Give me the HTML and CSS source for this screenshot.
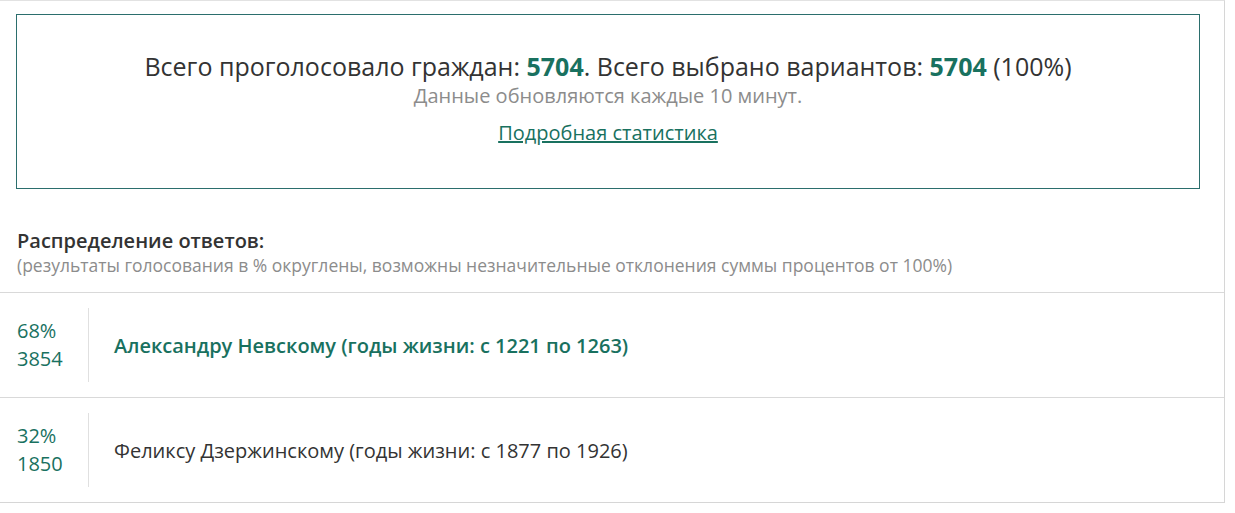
FILE: index.html
```html
<!DOCTYPE html>
<html lang="ru">
<head>
    <meta charset="UTF-8">
    <meta name="viewport" content="width=device-width, initial-scale=1.0">
    <title>Результаты голосования</title>
    <link rel="stylesheet" href="styles.css">
</head>
<body>

    <div class="poll">
        <div class="summary">
            <p class="summary-total">Всего проголосовало граждан: <b>5704</b>. Всего выбрано вариантов: <b>5704</b> (100%)</p>
            <p class="summary-note">Данные обновляются каждые 10 минут.</p>
            <p class="summary-more"><a href="#">Подробная статистика</a></p>
        </div>

        <div class="answers-head">
            <h3>Распределение ответов:</h3>
            <p>(результаты голосования в % округлены, возможны незначительные отклонения суммы процентов от 100%)</p>
        </div>

        <div class="answer">
            <div class="answer-count">
                <span>68%</span>
                <span>3854</span>
            </div>
            <div class="answer-text answer-win">Александру Невскому (годы жизни: с 1221 по 1263)</div>
        </div>

        <div class="answer">
            <div class="answer-count">
                <span>32%</span>
                <span>1850</span>
            </div>
            <div class="answer-text">Феликсу Дзержинскому (годы жизни: с 1877 по 1926)</div>
        </div>
    </div>

</body>
</html>
```

FILE: styles.css
```css
body {
    margin: 0;
    background-color: #fff;
    font-family: "Open Sans", Arial, sans-serif;
    color: #333;
}

.poll {
    width: 1225px;
    border-top: 1px solid #e2e2e2;
    border-right: 1px solid #d6d6d6;
    border-bottom: 1px solid #d6d6d6;
    box-sizing: border-box;
    padding-top: 13px;
}

.summary {
    margin: 0 24px 0 16px;
    border: 1px solid #2b6e6d;
    text-align: center;
    padding: 35px 0 42px;
}

.summary p {
    margin: 0;
}

.summary-total {
    font-size: 25px;
    line-height: 32px;
    color: #333;
}

.summary-total b {
    color: #19715f;
}

.summary .summary-note {
    margin-top: 1px;
    font-size: 20px;
    line-height: 26px;
    color: #8c8c8c;
}

.summary .summary-more {
    margin-top: 11px;
    font-size: 20px;
    line-height: 26px;
}

.summary-more a {
    color: #19715f;
}

.answers-head {
    padding: 39px 17px 16px;
    border-bottom: 1px solid #d9d9d9;
}

.answers-head h3 {
    margin: 0;
    font-size: 20px;
    font-weight: 600;
    line-height: 26px;
    color: #333;
}

.answers-head p {
    margin: 0;
    font-size: 17.5px;
    line-height: 22px;
    color: #8c8c8c;
}

/* строки с вариантами ответа */
.answer {
    display: flex;
    align-items: center;
    padding: 15px 17px;
    border-bottom: 1px solid #d9d9d9;
}

.answer:last-child {
    border-bottom: none;
}

.answer-count {
    display: flex;
    flex-direction: column;
    justify-content: center;
    width: 71px;
    height: 74px;
    border-right: 1px solid #e0e0e0;
    font-size: 20px;
    line-height: 28px;
    color: #19715f;
}

.answer-text {
    padding-left: 25px;
    font-size: 20px;
    color: #333;
}

.answer-win {
    font-weight: 600;
    color: #19715f;
}
```
